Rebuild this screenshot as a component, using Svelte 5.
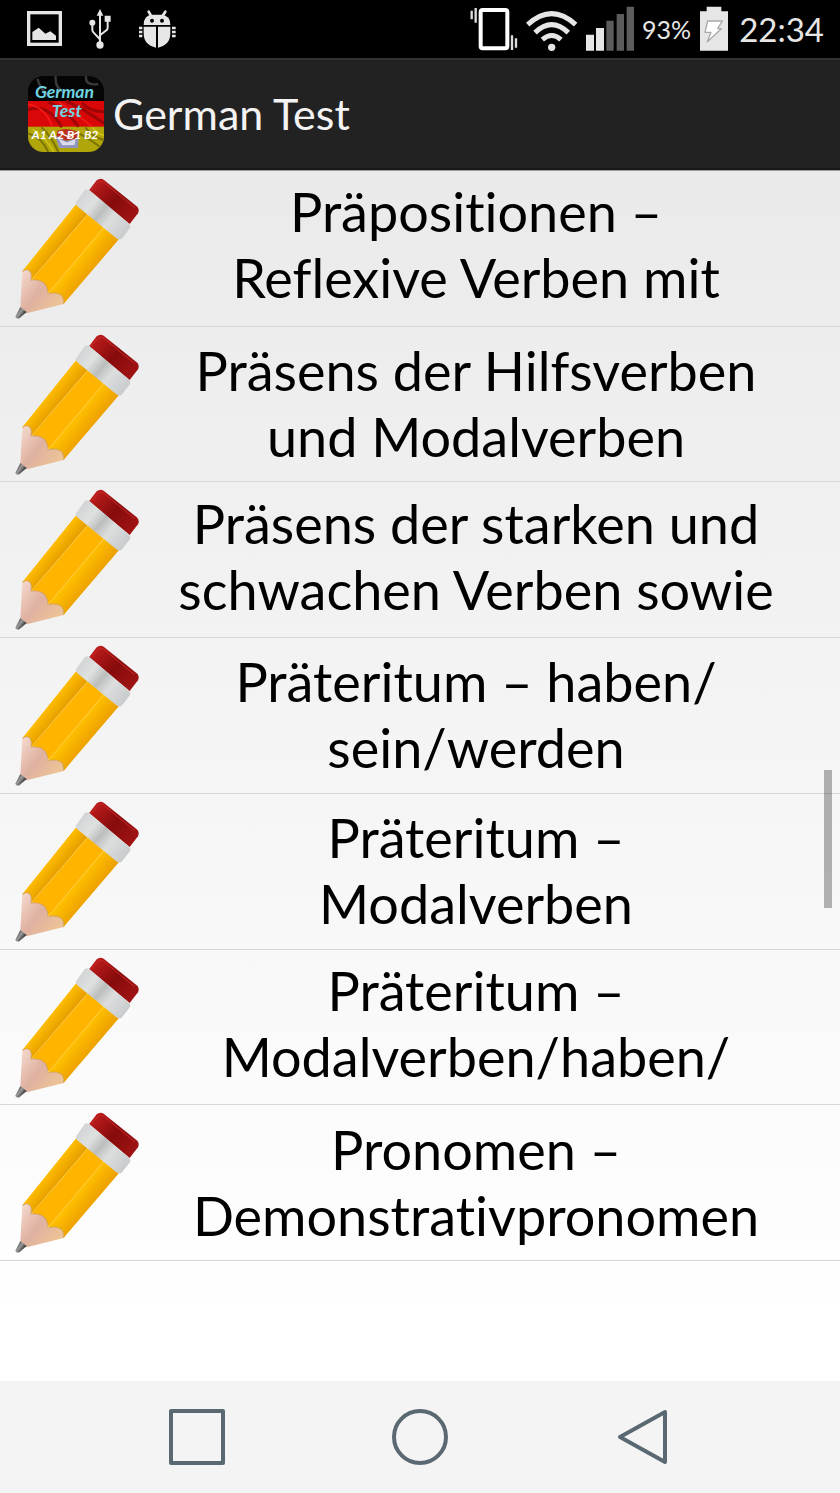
<script lang="ts">
	interface Topic {
		lines: string[];
		// titles that run on past the second line
		cut?: boolean;
	}

	const topics: Topic[] = [
		{ lines: ['Präpositionen –', 'Reflexive Verben mit'], cut: true },
		{ lines: ['Präsens der Hilfsverben', 'und Modalverben'] },
		{ lines: ['Präsens der starken und', 'schwachen Verben sowie'], cut: true },
		{ lines: ['Präteritum – haben/', 'sein/werden'] },
		{ lines: ['Präteritum –', 'Modalverben'] },
		{ lines: ['Präteritum –', 'Modalverben/haben/'], cut: true },
		{ lines: ['Pronomen –', 'Demonstrativpronomen'] }
	];

	const battery = 93;
	const time = '22:34';
</script>

{#snippet pencil()}
	<svg class="pencil" viewBox="0 30 480 440" aria-hidden="true">
		<path d="M229 118 L356 223 L190 417 L68 318Z" fill="#ffb400" />
		<path d="M229 118 L264 147 L97 345 L68 318Z" fill="url(#wood-left)" />
		<path d="M312 187 L356 223 L190 417 L144 388Z" fill="url(#wood-right)" />
		<path d="M264 147 L94 345 M312 187 L144 386" stroke="#ffd04a" stroke-width="3" fill="none" />
		<path
			d="M67 320 Q78 309 89 318 Q97 326 93 345 Q121 342 134 356 Q144 367 143 386 Q170 380 184 391 Q193 400 191 417 L80 445 L61 426Z"
			fill="url(#tip)"
		/>
		<path
			d="M67 320 Q78 309 89 318 Q97 326 93 345 Q121 342 134 356 Q144 367 143 386 Q170 380 184 391 Q193 400 191 417"
			fill="none"
			stroke="#c9995e"
			stroke-opacity="0.5"
			stroke-width="4"
		/>
		<path d="M61 426 L80 441 L58 460 Q49 463 46 455Z" fill="url(#lead)" />
		<path d="M267 76 L290 46 Q300 38 311 44 L410 124 Q420 133 414 145 L389 177Z" fill="url(#rubber)" />
		<path d="M274 76 L294 52 Q302 45 310 51 L404 128" fill="none" stroke="#c22a28" stroke-width="3" />
		<path d="M228 112 L254 76 Q261 70 268 75 L387 176 Q393 182 390 189 L365 221 Q358 226 351 221 L231 123 Q226 118 228 112Z" fill="url(#metal)" />
	</svg>
{/snippet}

<svg class="defs" aria-hidden="true">
	<defs>
		<linearGradient id="wood-left" gradientUnits="userSpaceOnUse" x1="145" y1="220" x2="182" y2="250">
			<stop offset="0" stop-color="#ffbd00" />
			<stop offset="1" stop-color="#e49b00" />
		</linearGradient>
		<linearGradient id="wood-right" gradientUnits="userSpaceOnUse" x1="225" y1="290" x2="275" y2="330">
			<stop offset="0" stop-color="#ffc000" />
			<stop offset="1" stop-color="#eb9d00" />
		</linearGradient>
		<linearGradient id="tip" x1="0" y1="0" x2="1" y2="0.8">
			<stop offset="0" stop-color="#f6dcd0" />
			<stop offset="0.5" stop-color="#dfb1a1" />
			<stop offset="1" stop-color="#efc694" />
		</linearGradient>
		<linearGradient id="lead" gradientUnits="userSpaceOnUse" x1="50" y1="436" x2="74" y2="454">
			<stop offset="0" stop-color="#4a4a4a" />
			<stop offset="0.4" stop-color="#9a9a9a" />
			<stop offset="0.9" stop-color="#2c2c2c" />
		</linearGradient>
		<linearGradient id="rubber" gradientUnits="userSpaceOnUse" x1="280" y1="60" x2="400" y2="160">
			<stop offset="0" stop-color="#bb1b1b" />
			<stop offset="0.5" stop-color="#870b0c" />
			<stop offset="1" stop-color="#9f1313" />
		</linearGradient>
		<linearGradient id="metal" gradientUnits="userSpaceOnUse" x1="240" y1="95" x2="375" y2="205">
			<stop offset="0" stop-color="#d2d5d6" />
			<stop offset="0.25" stop-color="#dfe1e1" />
			<stop offset="0.45" stop-color="#bcbebe" />
			<stop offset="0.65" stop-color="#dcdede" />
			<stop offset="1" stop-color="#c9cccd" />
		</linearGradient>
	</defs>
</svg>

<div class="screen">
	<div class="status">
		<div class="notifications">
			<svg width="36" height="36" viewBox="81 36 108 108" aria-hidden="true">
				<rect x="86" y="41" width="95" height="95" fill="none" stroke="#e6e6e6" stroke-width="10" />
				<path d="M97 123 V99 L116 86 L136 104 L151 97 L168 110 V123Z" fill="#e6e6e6" />
			</svg>
			<svg width="24" height="40" viewBox="267 30 72 120" aria-hidden="true">
				<g fill="none" stroke="#e6e6e6" stroke-width="6">
					<path d="M300 45 V135" />
					<path d="M277 72 V92 Q277 97 281 101 L299 120" />
					<path d="M323 60 V86 Q323 91 319 94 L300 109" />
				</g>
				<path d="M300 30 L310 50 H290Z M314 50 H332 V68 H314Z" fill="#e6e6e6" />
				<circle cx="277" cy="71" r="9" fill="#e6e6e6" />
				<circle cx="300" cy="138" r="11" fill="#e6e6e6" />
			</svg>
			<svg width="38" height="40" viewBox="416 28 114 120" aria-hidden="true">
				<g fill="#e6e6e6">
					<path d="M430 76 Q430 46 456 45 H484 Q510 47 510 76Z" />
					<path d="M430 81 H467 V144 Q430 136 430 101Z M473 81 H510 V101 Q510 136 473 144Z" />
					<path d="M415 81h11v8h-11z M415 93h11v8h-11z M415 105h11v8h-11z M515 81h11v8h-11z M515 93h11v8h-11z M515 105h11v8h-11z" />
				</g>
				<path d="M445 36 L453 50 M495 36 L486 50" stroke="#e6e6e6" stroke-width="8" stroke-linecap="round" />
				<circle cx="455" cy="63" r="6" />
				<circle cx="485" cy="63" r="6" />
			</svg>
		</div>
		<div class="system">
			<svg width="48" height="46" viewBox="30 18 144 138" aria-hidden="true">
				<rect x="62" y="30" width="80" height="115" rx="6" fill="none" stroke="#fff" stroke-width="12" />
				<path d="M35 32 V58 M47 24 V68 M156 106 V150 M168 115 V143" stroke="#ddd" stroke-width="7" />
			</svg>
			<svg width="52" height="46" viewBox="197 18 156 138" aria-hidden="true">
				<g fill="none" stroke="#e6e6e6" stroke-width="15">
					<path d="M202 74 Q274 8 346 74" />
					<path d="M224 98 Q274 50 324 98" />
					<path d="M246 119 Q274 94 302 119" />
				</g>
				<circle cx="274" cy="142" r="11" fill="#e6e6e6" />
			</svg>
			<svg width="48" height="46" viewBox="378 18 144 138" aria-hidden="true">
				<path d="M378 104h24v48h-24z M408 84h24v68h-24z" fill="#e6e6e6" />
				<path d="M439 62h22v90h-22z M470 42h22v110h-22z M500 20h22v132h-22z" fill="#5c5c5c" />
			</svg>
			<span class="percent">{battery}%</span>
			<svg width="28" height="46" viewBox="720 18 84 138" aria-hidden="true">
				<path d="M740 20 H784 V34 H804 V152 H720 V34 H740Z" fill="#e6e6e6" />
				<path
					d="M743 63 H787 L773 86 H784 L742 125 L753 97 H735Z"
					fill="#fff"
					stroke="#a9a9a9"
					stroke-width="4"
					stroke-linejoin="round"
				/>
			</svg>
			<span class="clock">{time}</span>
		</div>
	</div>

	<header>
		<svg class="logo" viewBox="0 0 225 225" aria-hidden="true">
			<clipPath id="logo-shape"><rect width="225" height="225" rx="46" /></clipPath>
			<g clip-path="url(#logo-shape)">
				<rect width="225" height="75" fill="#050505" />
				<rect y="74" width="225" height="78" fill="#d90707" />
				<rect y="150" width="225" height="75" fill="#b0a509" />
				<path d="M28 8 Q36 40 62 58 M82 0 Q78 34 108 50 M172 0 Q168 30 208 24" stroke="#3a3a3a" stroke-width="7" fill="none" />
				<path d="M0 100 Q60 80 100 152 M60 76 Q110 100 150 150 M112 74 Q170 100 225 140 M160 80 Q180 105 225 106" stroke="#a00404" stroke-width="9" fill="none" />
				<path d="M0 84 Q50 90 72 150 M90 76 Q140 110 190 150" stroke="#f51a1a" stroke-width="5" fill="none" />
				<path d="M0 170 Q40 180 60 225 M40 152 Q70 180 90 225 M150 170 Q190 190 225 220 M170 152 Q190 180 225 190" stroke="#7d7403" stroke-width="6" fill="none" />
				<path d="M14 158 Q60 190 76 225 M190 152 Q205 172 225 176" stroke="#cfc316" stroke-width="5" fill="none" />
				<path d="M80 176 L92 213 L148 213 L150 180 L116 192Z" fill="#8f95be" />
				<path d="M90 186 L102 205 L138 204 L141 186 L116 197Z" fill="#dcdcec" />
				<path d="M88 162 Q115 150 150 166 L148 184 L112 192 L84 178Z" fill="#b8321f" />
				<path d="M94 168 L120 180 L146 168" stroke="#fff" stroke-width="4" fill="none" />
			</g>
			<text class="logo-name" x="108" y="66">German</text>
			<text class="logo-name" x="115" y="121">Test</text>
			<text class="logo-levels" x="110" y="187">A1 A2 B1 B2</text>
		</svg>
		<h1>German Test</h1>
	</header>

	<main>
		<ul>
			{#each topics as topic}
				<li>
					<button type="button" class="topic" class:cut={topic.cut}>
						{@render pencil()}
						<span class="title">
							{#each topic.lines as line}
								<span class="line">{line}</span>
							{/each}
						</span>
					</button>
				</li>
			{/each}
		</ul>
		<div class="scrollbar"></div>
	</main>

	<nav>
		<button type="button" aria-label="Recent apps">
			<svg width="56" height="56" viewBox="0 0 56 56">
				<rect x="2" y="2" width="52" height="52" />
			</svg>
		</button>
		<button type="button" aria-label="Home">
			<svg width="56" height="56" viewBox="0 0 56 56">
				<circle cx="28" cy="28" r="26" />
			</svg>
		</button>
		<button type="button" aria-label="Back">
			<svg width="56" height="56" viewBox="0 0 56 56">
				<path d="M50 3 V53 L5 28Z" />
			</svg>
		</button>
	</nav>
</div>

<style>
	:global(body) {
		margin: 0;
		background: #fff;
	}

	.screen {
		display: flex;
		flex-direction: column;
		min-height: 100vh;
		font-family: Lato, 'Open Sans', sans-serif;
		font-variant-ligatures: none;
	}

	.defs {
		position: absolute;
		width: 0;
		height: 0;
	}

	svg {
		display: block;
		flex: none;
	}

	button {
		margin: 0;
		padding: 0;
		border: 0;
		background: none;
		font: inherit;
		color: inherit;
		cursor: pointer;
	}

	.status {
		display: flex;
		justify-content: space-between;
		align-items: center;
		box-sizing: border-box;
		height: 58px;
		padding: 0 16px 0 27px;
		background: #000;
		color: #e6e6e6;
	}

	.notifications {
		display: flex;
		align-items: center;
		gap: 26px;
	}

	.system {
		display: flex;
		align-items: center;
		gap: 8px;
	}

	.percent {
		width: 50px;
		font-size: 25px;
		line-height: 32px;
	}

	.clock {
		width: 88px;
		font-size: 33px;
		line-height: 40px;
		text-align: right;
	}

	header {
		display: flex;
		align-items: center;
		gap: 9px;
		box-sizing: border-box;
		height: 112px;
		padding: 0 28px;
		border-top: 2px solid #333;
		border-bottom: 2px solid #181818;
		background: #222;
	}

	.logo {
		width: 76px;
		height: 76px;
	}

	.logo-name {
		fill: #6fd3e0;
		font-size: 52px;
		font-weight: bold;
		font-style: italic;
		text-anchor: middle;
	}

	.logo-levels {
		fill: #fff;
		font-size: 36px;
		font-weight: bold;
		font-style: italic;
		text-anchor: middle;
	}

	h1 {
		margin: 0;
		font-size: 43px;
		font-weight: 400;
		line-height: 50px;
		color: #f3f3f3;
	}

	main {
		position: relative;
		display: flex;
		flex: 1;
		padding-bottom: 120px;
		border-top: 1px solid #999;
		background: linear-gradient(#eaeaea, #fff 95%);
	}

	ul {
		display: grid;
		flex: 1;
		grid-auto-rows: 1fr;
		margin: 0;
		padding: 0;
		list-style: none;
	}

	li {
		display: flex;
		border-bottom: 1px solid #d6d6d6;
	}

	.topic {
		display: flex;
		flex: 1;
		align-items: center;
		padding-right: 48px;
	}

	.pencil {
		width: 160px;
	}

	.title {
		flex: 1;
		font-size: 54px;
		line-height: 66px;
		text-align: center;
		white-space: nowrap;
		color: #000;
	}

	.cut .title {
		padding-bottom: 6px;
	}

	.line {
		display: block;
	}

	.scrollbar {
		position: absolute;
		top: 49.5%;
		right: 8px;
		width: 8px;
		height: 11.4%;
		background: rgba(0, 0, 0, 0.29);
	}

	nav {
		display: grid;
		grid-template-columns: repeat(3, 1fr);
		height: 112px;
		padding: 0 86px;
		background: #f4f4f4;
	}

	nav button {
		display: flex;
		align-items: center;
		justify-content: center;
	}

	nav svg {
		fill: none;
		stroke: #5a6872;
		stroke-width: 4;
		stroke-linejoin: round;
	}
</style>
